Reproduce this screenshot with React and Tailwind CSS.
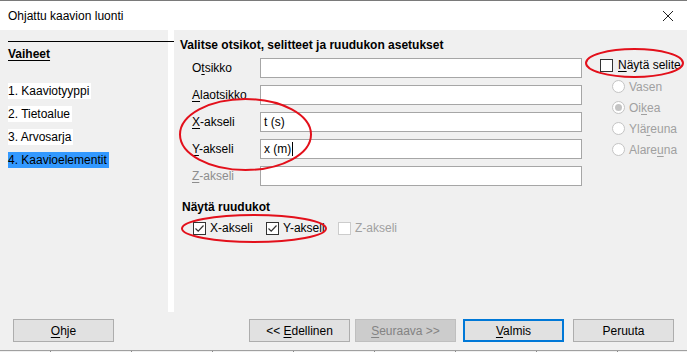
import { useState } from 'react';

// ── small helpers ───────────────────────────────────────────────────────────

const U = ({ children }) => <span className="underline underline-offset-2">{children}</span>;

const TextField = ({ value, caret }) => (
  <div className="w-[322px] h-[20px] bg-white border border-[#a6a6a6] flex items-center pl-[3px] text-black">
    {value}
    {caret && <span className="inline-block w-px h-[14px] bg-black ml-px" />}
  </div>
);

const CheckBox = ({ checked, disabled }) => (
  <span
    className={`w-[13px] h-[13px] border bg-white flex items-center justify-center shrink-0 ${
      disabled ? 'border-[#cccccc]' : 'border-[#333333]'
    }`}
  >
    {checked && (
      <svg width="11" height="11" viewBox="0 0 11 11">
        <path d="M1.5 5.5 L4.2 8.2 L9.5 2.5" fill="none" stroke="#333" strokeWidth="1.2" />
      </svg>
    )}
  </span>
);

const Radio = ({ checked, label }) => (
  <div className="h-[21px] flex items-center pl-[12px] text-[#a0a0a0]">
    <span className="w-[13px] h-[13px] rounded-full border border-[#c4c4c4] bg-white flex items-center justify-center shrink-0">
      {checked && <span className="w-[7px] h-[7px] rounded-full bg-[#c4c4c4]" />}
    </span>
    <span className="ml-[4px]">{label}</span>
  </div>
);

const Btn = ({ children, className = '' }) => (
  <div
    className={`w-[101px] h-[23px] border flex items-center justify-center ${className}`}
  >
    {children}
  </div>
);

const STEPS = [
  { id: 1, label: '1. Kaaviotyyppi' },
  { id: 2, label: '2. Tietoalue' },
  { id: 3, label: '3. Arvosarja' },
  { id: 4, label: '4. Kaavioelementit' },
];

const ROWS = [
  { label: <>O<U>t</U>sikko</>, value: '' },
  { label: <><U>A</U>laotsikko</>, value: '' },
  { label: <><U>X</U>-akseli</>, value: 't (s)' },
  { label: <><U>Y</U>-akseli</>, value: 'x (m)', caret: true },
  { label: <><U>Z</U>-akseli</>, value: '', disabled: true },
];

const TICKS = [50, 131, 212, 293, 374, 455, 536, 617];

// ── dialog ──────────────────────────────────────────────────────────────────

export default function App() {
  const [active] = useState(4);

  return (
    <div
      className="relative w-[687px] h-[352px] overflow-hidden bg-[#f0f0f0] text-[12px] leading-[16px] text-black"
      style={{ fontFamily: '"Liberation Sans", Arial, sans-serif' }}
    >
      {/* ── Title bar ── */}
      <div className="h-[30px] bg-white border-t border-[#7a7a7a] flex items-center pl-[8px] pr-[13px]">
        <span className="flex-1">Ohjattu kaavion luonti</span>
        <svg width="12" height="12" viewBox="0 0 12 12">
          <path d="M1 1 L11 11 M11 1 L1 11" stroke="#222" strokeWidth="1" />
        </svg>
      </div>

      {/* ── Body ── */}
      <div className="h-[282px] flex">
        {/* Steps */}
        <div className="w-[174px] border-r-[6px] border-white pl-[8px]">
          <div className="mt-[11px] h-px bg-black mr-[-6px]" />
          <div className="mt-[4px] font-bold underline underline-offset-2">Vaiheet</div>
          <div className="mt-[21px] flex flex-col gap-[7px] items-start">
            {STEPS.map(s => (
              <div
                key={s.id}
                className={s.id === active ? 'bg-[#3399ff] pr-[2px]' : 'bg-white pr-[2px]'}
              >
                {s.label}
              </div>
            ))}
          </div>
        </div>

        {/* Options */}
        <div className="flex-1 pl-[6px] pt-[7px]">
          <div className="font-bold">Valitse otsikot, selitteet ja ruudukon asetukset</div>

          <div className="mt-[5px] flex">
            <div className="flex flex-col gap-[7px]">
              {ROWS.map((r, i) => (
                <div key={i} className="flex items-center h-[20px]">
                  <span className={`w-[80px] pl-[12px] ${r.disabled ? 'text-[#8d8d8d]' : ''}`}>
                    {r.label}
                  </span>
                  <TextField value={r.value} caret={r.caret} />
                </div>
              ))}
            </div>

            <div className="ml-[18px] flex flex-col">
              <div className="h-[16px] flex items-center mt-[-1px]">
                <CheckBox />
                <span className="ml-[5px]"><U>N</U>äytä selite</span>
              </div>
              <div className="mt-[3px]">
                <Radio label="Vasen" />
                <Radio checked label={<>Oi<U>k</U>ea</>} />
                <Radio label={<>Ylä<U>r</U>euna</>} />
                <Radio label={<>Alare<U>u</U>na</>} />
              </div>
            </div>
          </div>

          <div className="mt-[13px] pl-[2px] font-bold">Näytä ruudukot</div>
          <div className="mt-[5px] pl-[13px] flex items-center h-[16px]">
            <div className="w-[73px] flex items-center">
              <CheckBox checked />
              <span className="ml-[4px]">X-akseli</span>
            </div>
            <div className="w-[72px] flex items-center">
              <CheckBox checked />
              <span className="ml-[4px]">Y-akseli</span>
            </div>
            <div className="flex items-center text-[#a0a0a0]">
              <CheckBox disabled />
              <span className="ml-[4px]">Z-akseli</span>
            </div>
          </div>
        </div>
      </div>

      {/* ── Buttons ── */}
      <div className="mt-[7px] flex pl-[13px]">
        <Btn className="bg-[#e1e1e1] border-[#adadad]"><span><U>O</U>hje</span></Btn>
        <Btn className="ml-[135px] bg-[#e1e1e1] border-[#adadad]"><span>&lt;&lt; <U>E</U>dellinen</span></Btn>
        <Btn className="ml-[5px] bg-[#cccccc] border-[#bfbfbf] text-[#838383]"><span><U>S</U>euraava &gt;&gt;</span></Btn>
        <Btn className="ml-[7px] bg-[#e1e1e1] border-2 border-[#0078d7]"><span><U>V</U>almis</span></Btn>
        <Btn className="ml-[9px] bg-[#e1e1e1] border-[#adadad]"><span>Peruuta</span></Btn>
      </div>

      {/* ── Bottom edge ── */}
      <div className="mt-[8px] h-[2px] border-t border-[#a0a0a0] flex">
        {TICKS.map((x, i) => (
          <span key={x} className={`w-px h-px bg-[#8a8a8a] ${i === 0 ? 'ml-[50px]' : 'ml-[80px]'}`} />
        ))}
      </div>

      {/* ── Red annotation ellipses ── */}
      <svg className="absolute inset-0 pointer-events-none" width="687" height="352">
        <g fill="none" stroke="#e3101b" strokeWidth="2">
          <ellipse cx="245.5" cy="134.5" rx="65.5" ry="35.5" />
          <ellipse cx="634.5" cy="63" rx="48.5" ry="14" />
          <ellipse cx="254" cy="228.5" rx="72" ry="13.5" />
        </g>
      </svg>
    </div>
  );
}
